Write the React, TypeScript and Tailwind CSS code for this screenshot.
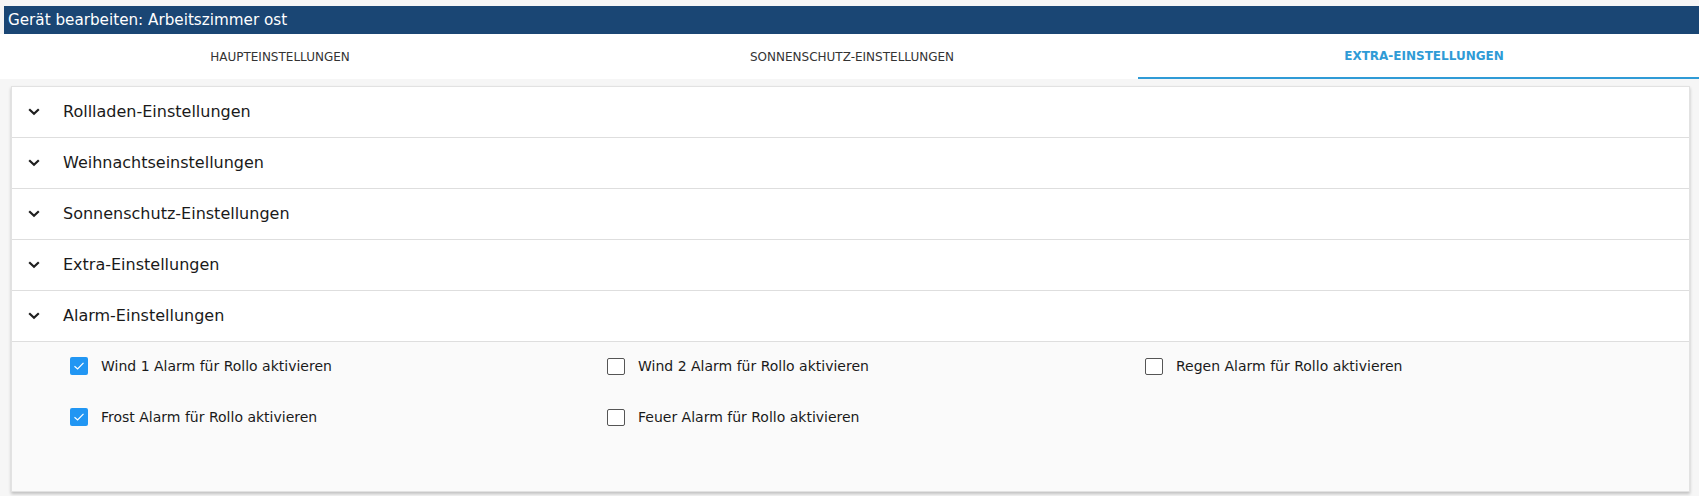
import React from "react";

const font = { fontFamily: '"DejaVu Sans", Verdana, sans-serif' };

const sections = [
  "Rollladen-Einstellungen",
  "Weihnachtseinstellungen",
  "Sonnenschutz-Einstellungen",
  "Extra-Einstellungen",
];

const alarms = [
  { label: "Wind 1 Alarm für Rollo aktivieren", checked: true },
  { label: "Wind 2 Alarm für Rollo aktivieren", checked: false },
  { label: "Regen Alarm für Rollo aktivieren", checked: false },
  { label: "Frost Alarm für Rollo aktivieren", checked: true },
  { label: "Feuer Alarm für Rollo aktivieren", checked: false },
];

const Chevron = () => (
  <svg width="12" height="8" viewBox="0 0 12 8" className="shrink-0">
    <polyline
      points="1.2,1.2 6,5.8 10.8,1.2"
      fill="none"
      stroke="#1f1f1f"
      strokeWidth="2.2"
    />
  </svg>
);

const Checkbox = ({ checked }: { checked: boolean }) =>
  checked ? (
    <span className="w-[18px] h-[18px] bg-[#2196f3] rounded-[2px] flex items-center justify-center shrink-0">
      <svg width="12" height="10" viewBox="0 0 12 10">
        <polyline
          points="1.5,5.2 4.6,8 10.5,1.8"
          fill="none"
          stroke="#ffffff"
          strokeWidth="1.2"
        />
      </svg>
    </span>
  ) : (
    <span className="w-[18px] h-[17px] border border-[#555] rounded-[2px] bg-white shrink-0" />
  );

const SectionHeader = ({ title }: { title: string }) => (
  <div className="h-[51px] border-b border-[#dedede] flex items-center pl-[16px] bg-white">
    <Chevron />
    <span className="ml-[23px] text-[16px] text-[#1a1a1a]">{title}</span>
  </div>
);

export default function App() {
  return (
    <div className="min-h-screen bg-[#f6f6f6] pt-[6px] overflow-hidden" style={font}>
      <div className="ml-[4px] h-[28px] bg-[#1a4674] text-white text-[15.2px] pl-[4px] flex items-center">
        Gerät bearbeiten: Arbeitszimmer ost
      </div>

      <div className="bg-white h-[45px] overflow-hidden">
        <div className="flex -ml-[6px] w-[1716px] h-full">
          <div className="w-[572px] flex items-center justify-center text-[12px] text-[#333]">
            HAUPTEINSTELLUNGEN
          </div>
          <div className="w-[572px] flex items-center justify-center text-[12px] text-[#333]">
            SONNENSCHUTZ-EINSTELLUNGEN
          </div>
          <div className="w-[572px] flex items-center justify-center text-[12px] font-semibold text-[#2f9bd6] border-b-2 border-[#2f9bd6]">
            EXTRA-EINSTELLUNGEN
          </div>
        </div>
      </div>

      <div className="ml-[11px] mr-[9px] mt-[7px] bg-white border border-[#e2e2e2] shadow-[0_2px_3px_rgba(0,0,0,0.22)]">
        {sections.map((s) => (
          <SectionHeader key={s} title={s} />
        ))}
        <SectionHeader title="Alarm-Einstellungen" />
        <div className="bg-[#fafafa] h-[149px] pt-[7px] pl-[58px]">
          <div className="grid grid-cols-[537px_538px_534px] gap-y-[17px]">
            {alarms.map((a) => (
              <div key={a.label} className="h-[34px] flex items-center">
                <Checkbox checked={a.checked} />
                <span className="ml-[13px] text-[14px] text-[#1a1a1a]">{a.label}</span>
              </div>
            ))}
          </div>
        </div>
      </div>
    </div>
  );
}
